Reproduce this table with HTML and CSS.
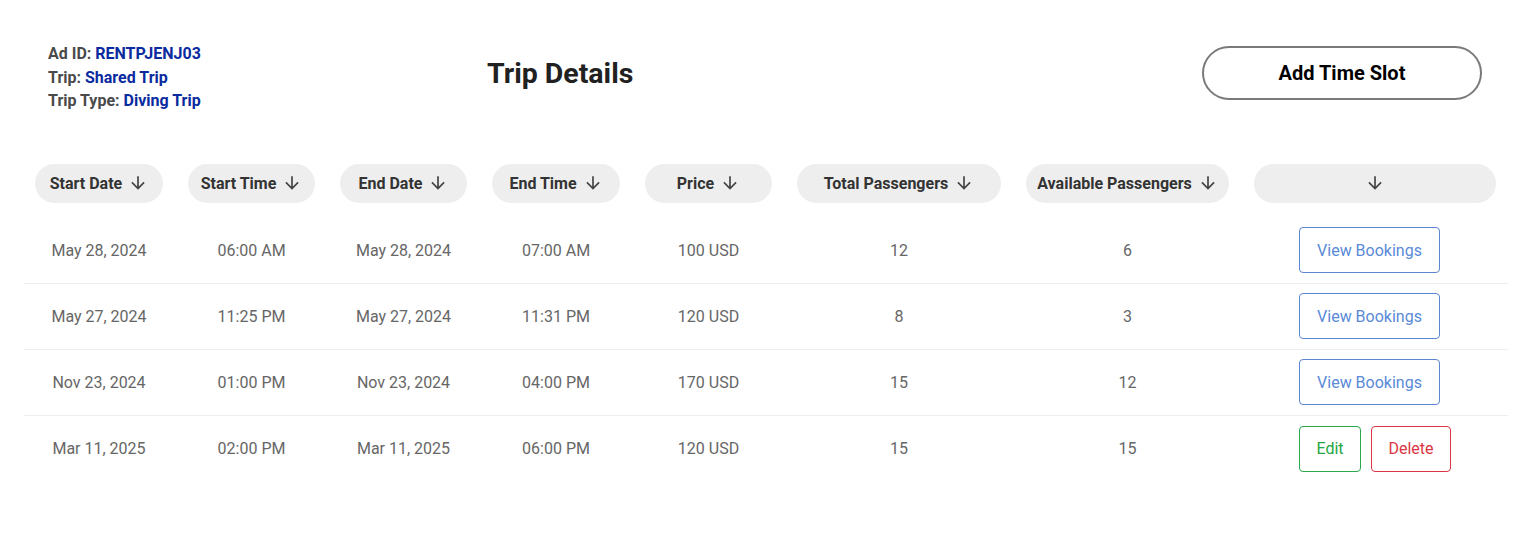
FILE: index.html
```html
<!DOCTYPE html>
<html lang="en">
<head>
<meta charset="utf-8">
<title>Trip Details</title>
<link rel="stylesheet" href="styles.css">
</head>
<body>
<div class="page">
  <div class="top">
    <div class="info">
      <div>Ad ID: <span class="val">RENTPJENJ03</span></div>
      <div>Trip: <span class="val">Shared Trip</span></div>
      <div>Trip Type: <span class="val">Diving Trip</span></div>
    </div>
    <h1 class="title">Trip Details</h1>
    <button class="add-btn">Add Time Slot</button>
  </div>

  <div class="table">
    <div class="row head">
      <div class="pill">Start Date <svg class="arr" viewBox="0 0 24 24"><path d="M20 12l-1.41-1.41L13 16.17V4h-2v12.17l-5.58-5.59L4 12l8 8 8-8z"/></svg></div>
      <div class="pill">Start Time <svg class="arr" viewBox="0 0 24 24"><path d="M20 12l-1.41-1.41L13 16.17V4h-2v12.17l-5.58-5.59L4 12l8 8 8-8z"/></svg></div>
      <div class="pill">End Date <svg class="arr" viewBox="0 0 24 24"><path d="M20 12l-1.41-1.41L13 16.17V4h-2v12.17l-5.58-5.59L4 12l8 8 8-8z"/></svg></div>
      <div class="pill">End Time <svg class="arr" viewBox="0 0 24 24"><path d="M20 12l-1.41-1.41L13 16.17V4h-2v12.17l-5.58-5.59L4 12l8 8 8-8z"/></svg></div>
      <div class="pill">Price <svg class="arr" viewBox="0 0 24 24"><path d="M20 12l-1.41-1.41L13 16.17V4h-2v12.17l-5.58-5.59L4 12l8 8 8-8z"/></svg></div>
      <div class="pill">Total Passengers <svg class="arr" viewBox="0 0 24 24"><path d="M20 12l-1.41-1.41L13 16.17V4h-2v12.17l-5.58-5.59L4 12l8 8 8-8z"/></svg></div>
      <div class="pill">Available Passengers <svg class="arr" viewBox="0 0 24 24"><path d="M20 12l-1.41-1.41L13 16.17V4h-2v12.17l-5.58-5.59L4 12l8 8 8-8z"/></svg></div>
      <div class="pill"><svg class="arr" viewBox="0 0 24 24"><path d="M20 12l-1.41-1.41L13 16.17V4h-2v12.17l-5.58-5.59L4 12l8 8 8-8z"/></svg></div>
    </div>

    <div class="row data">
      <div class="cell">May 28, 2024</div>
      <div class="cell">06:00 AM</div>
      <div class="cell">May 28, 2024</div>
      <div class="cell">07:00 AM</div>
      <div class="cell">100 USD</div>
      <div class="cell">12</div>
      <div class="cell">6</div>
      <div class="cell actions"><button class="btn view">View Bookings</button></div>
    </div>
    <div class="row data">
      <div class="cell">May 27, 2024</div>
      <div class="cell">11:25 PM</div>
      <div class="cell">May 27, 2024</div>
      <div class="cell">11:31 PM</div>
      <div class="cell">120 USD</div>
      <div class="cell">8</div>
      <div class="cell">3</div>
      <div class="cell actions"><button class="btn view">View Bookings</button></div>
    </div>
    <div class="row data">
      <div class="cell">Nov 23, 2024</div>
      <div class="cell">01:00 PM</div>
      <div class="cell">Nov 23, 2024</div>
      <div class="cell">04:00 PM</div>
      <div class="cell">170 USD</div>
      <div class="cell">15</div>
      <div class="cell">12</div>
      <div class="cell actions"><button class="btn view">View Bookings</button></div>
    </div>
    <div class="row data last">
      <div class="cell">Mar 11, 2025</div>
      <div class="cell">02:00 PM</div>
      <div class="cell">Mar 11, 2025</div>
      <div class="cell">06:00 PM</div>
      <div class="cell">120 USD</div>
      <div class="cell">15</div>
      <div class="cell">15</div>
      <div class="cell actions"><button class="btn edit">Edit</button><button class="btn del">Delete</button></div>
    </div>
  </div>
</div>
</body>
</html>
```
FILE: styles.css
```css
* { box-sizing: border-box; }
body {
  margin: 0;
  background: #fff;
  font-family: Roboto, "Liberation Sans", Arial, sans-serif;
  color: #333;
}
.page {
  width: 1484px;
  margin-left: 24px;
  padding-top: 42px;
}
.top {
  display: grid;
  grid-template-columns: 439px 1fr auto;
  padding: 0 26px 0 24px;
  align-items: start;
}
.info {
  font-size: 16px;
  font-weight: 700;
  line-height: 23.5px;
  color: #4a4a4a;
}
.info .val { color: #0a2aa0; }
.title {
  margin: 15px 0 0;
  font-size: 28.5px;
  line-height: 34px;
  font-weight: 700;
  color: #212121;
}
.add-btn {
  margin-top: 4px;
  width: 280px;
  height: 54px;
  border: 2px solid #7a7a7a;
  border-radius: 27px;
  background: #fff;
  font-family: inherit;
  font-size: 20px;
  font-weight: 700;
  color: #000;
  cursor: pointer;
}
.table { margin-top: 51px; }
.row {
  display: grid;
  grid-template-columns: 128px 127px 127px 128px 127px 204px 203px 242px;
  column-gap: 25px;
  padding: 0 12px 0 11px;
}
.row.head { margin-bottom: 15px; }
.pill {
  height: 39px;
  border-radius: 20px;
  background: #eeeeee;
  display: flex;
  align-items: center;
  justify-content: center;
  gap: 6px;
  font-size: 16px;
  font-weight: 700;
  color: #333;
}
.arr { width: 20px; height: 20px; fill: #444; }
.row.data {
  height: 66px;
  border-bottom: 1px solid #efefef;
  align-items: center;
}
.row.data.last { border-bottom: none; }
.cell {
  text-align: center;
  font-size: 16px;
  color: #666;
}
.cell.actions {
  display: flex;
  gap: 10px;
  padding-left: 45px;
}
.btn {
  height: 46px;
  background: #fff;
  border-radius: 4px;
  font-family: inherit;
  font-size: 16px;
  cursor: pointer;
}
.btn.view { width: 141px; border: 1px solid #5a87cf; color: #5a8ad8; }
.btn.edit { width: 62px; border: 1px solid #2aa84a; color: #23a640; }
.btn.del { width: 80px; border: 1px solid #dc3545; color: #dc3545; }
```
